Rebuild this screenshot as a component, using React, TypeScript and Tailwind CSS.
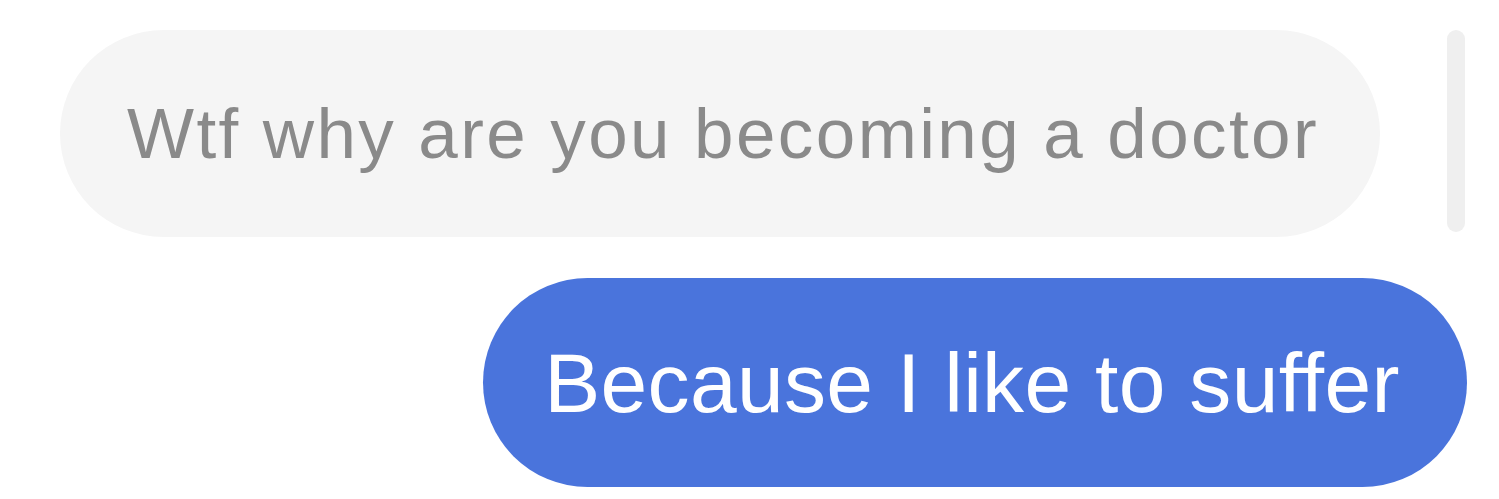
export default function App() {
  return (
    <div
      className="w-[1499px] h-[499px] bg-white overflow-hidden flex flex-col pt-[30px]"
      style={{ fontFamily: '"Liberation Sans", Arial, sans-serif' }}
    >
      {/* incoming message + scroll indicator */}
      <div className="flex items-start">
        <div className="ml-[60px] w-[1320px] h-[207px] rounded-full bg-[#f5f5f5] flex items-center justify-center">
          <span className="text-[71px] leading-none text-[#8a8a8a] whitespace-nowrap tracking-[2.4px] pl-[6px]">
            Wtf why are you becoming a doctor
          </span>
        </div>
        <div className="ml-[67px] w-[18px] h-[202px] rounded-full bg-[#efefef]" />
      </div>

      {/* outgoing message */}
      <div className="flex justify-end pr-[32px] mt-[41px]">
        <div className="w-[984px] h-[209px] rounded-full bg-[#4a74dc] flex items-center justify-center">
          <span className="text-[84px] leading-none text-white whitespace-nowrap tracking-[0.3px] pr-[6px]">
            Because I like to suffer
          </span>
        </div>
      </div>
    </div>
  );
}
